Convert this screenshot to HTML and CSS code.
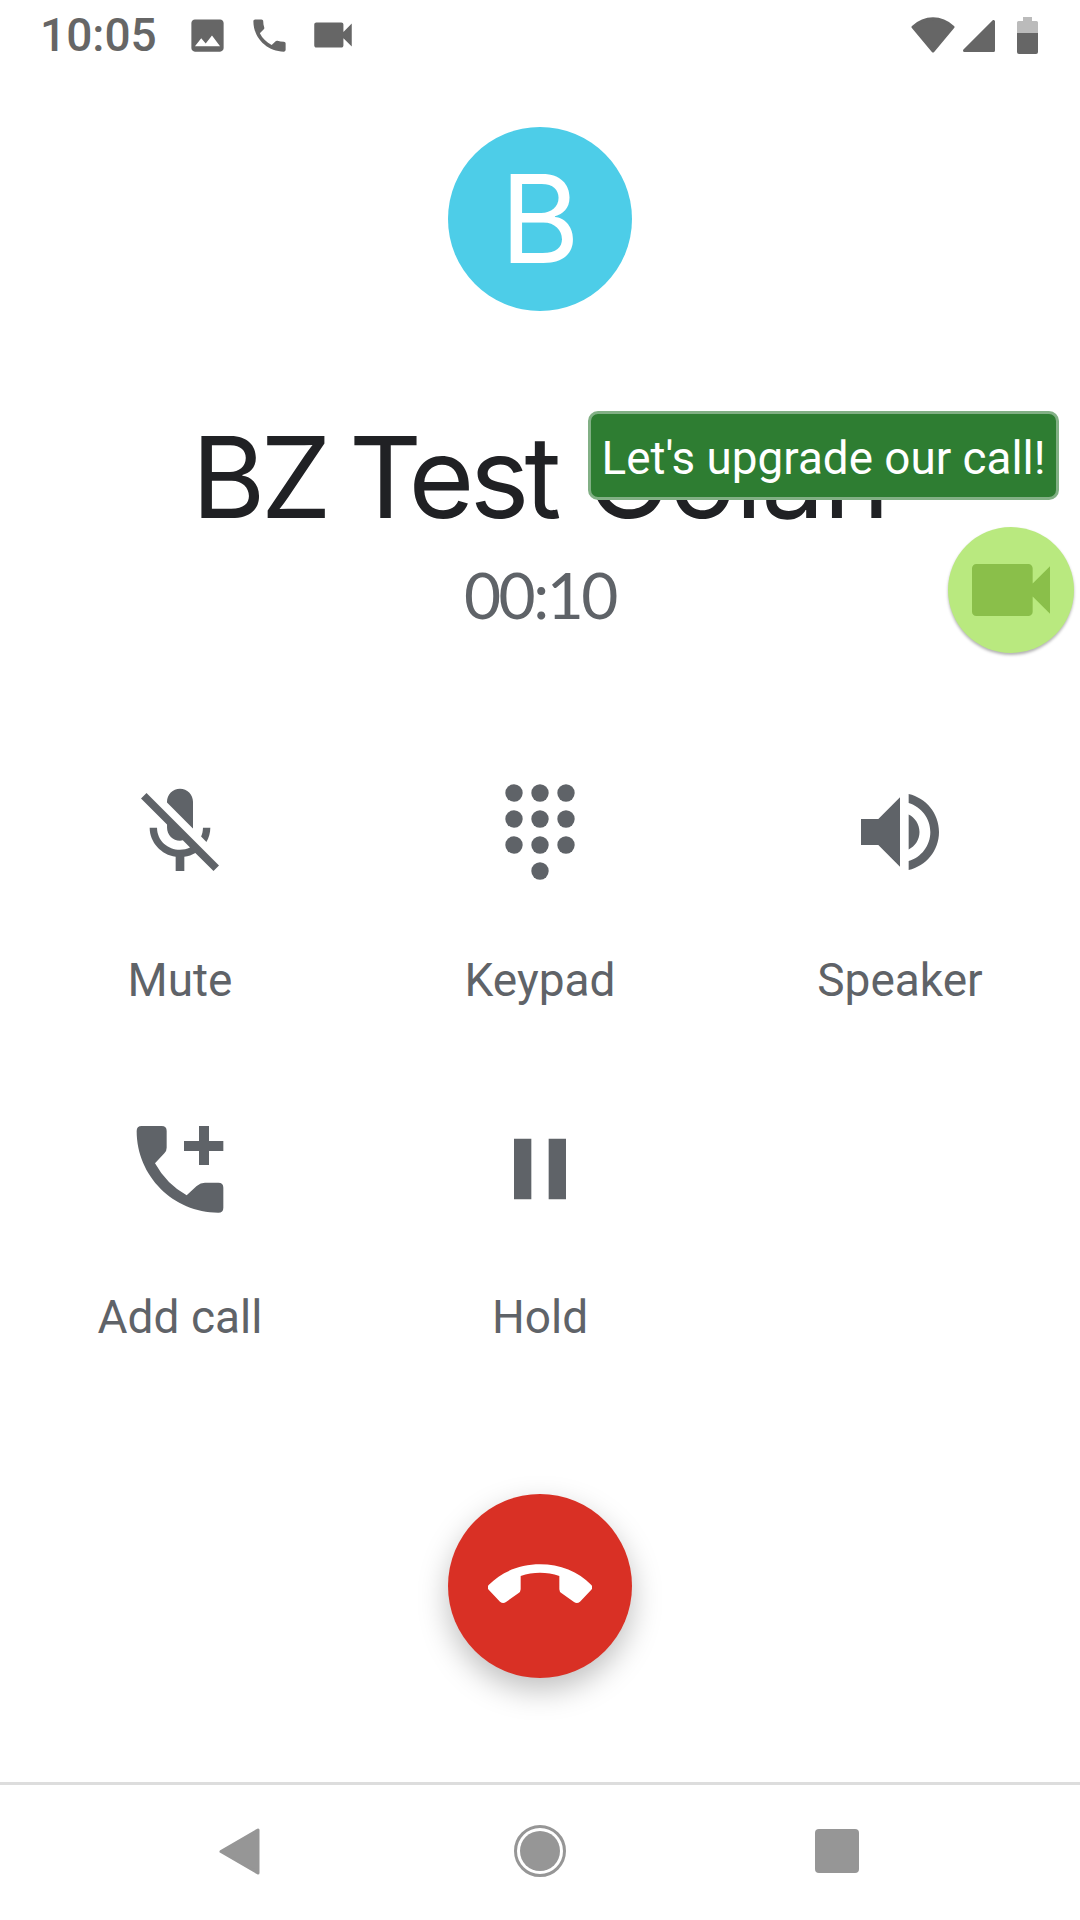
FILE: index.html
```html
<!DOCTYPE html>
<html lang="en">
<head>
    <meta charset="UTF-8">
    <meta name="viewport" content="width=device-width, initial-scale=1.0">
    <title>Call</title>
    <link rel="stylesheet" href="styles.css">
</head>
<body>
    <div class="screen">
        <div class="status-bar">
            <span class="clock">10:05</span>
            <svg class="status-icon image-icon" viewBox="0 0 24 24"><path d="M21 19V5c0-1.1-.9-2-2-2H5c-1.1 0-2 .9-2 2v14c0 1.1.9 2 2 2h14c1.1 0 2-.9 2-2zM8.5 13.5l2.5 3.01L14.5 12l4.5 6H5l3.5-4.5z"/></svg>
            <svg class="status-icon phone-icon" viewBox="0 0 24 24"><path d="M20 15.5c-1.25 0-2.45-.2-3.57-.57-.35-.11-.74-.03-1.02.24l-2.2 2.2c-2.83-1.44-5.15-3.75-6.59-6.59l2.2-2.21c.28-.26.36-.65.25-1C8.7 6.45 8.5 5.25 8.5 4c0-.55-.45-1-1-1H4c-.55 0-1 .45-1 1 0 9.39 7.61 17 17 17 .55 0 1-.45 1-1v-3.5c0-.55-.45-1-1-1z"/></svg>
            <svg class="status-icon cam-icon" viewBox="0 0 24 24"><path d="M17 10.5V7c0-.55-.45-1-1-1H4c-.55 0-1 .45-1 1v10c0 .55.45 1 1 1h12c.55 0 1-.45 1-1v-3.5l4 4v-11l-4 4z"/></svg>
            <div class="status-right">
                <svg class="wifi-icon" viewBox="0 0 44 36"><path d="M2 10C14 -1 30 -1 42 10L22 34Z" stroke-linejoin="round" stroke-width="3"/></svg>
                <svg class="signal-icon" viewBox="0 0 32 32"><path d="M30.5 1.5V30.5H1.5Z" stroke-linejoin="round" stroke-width="3"/></svg>
                <svg class="battery-icon" viewBox="0 0 21 37">
                    <path class="battery-empty" d="M6 0h9v4h4.500a1.500 1.500 0 0 1 1.500 1.500V16H0V5.500A1.500 1.500 0 0 1 1.500 4H6z"/>
                    <path d="M0 16h21v19a2 2 0 0 1-2 2H2a2 2 0 0 1-2-2z"/>
                </svg>
            </div>
        </div>

        <div class="caller">
            <div class="avatar">B</div>
            <div class="caller-name">BZ Test <span class="last-name">Golan</span></div>
            <div class="timer">00:10</div>
        </div>

        <div class="tooltip">Let's upgrade our call!</div>
        <div class="video-fab">
            <svg viewBox="0 0 24 24"><path d="M17 10.5V7c0-.55-.45-1-1-1H4c-.55 0-1 .45-1 1v10c0 .55.45 1 1 1h12c.55 0 1-.45 1-1v-3.500l4 4v-11l-4 4z"/></svg>
        </div>

        <div class="controls">
            <div class="control">
                <div class="control-icon">
                    <svg viewBox="0 0 24 24"><path d="M19 11h-1.700c0 .74-.16 1.430-.43 2.050l1.230 1.230c.56-.98.9-2.090.9-3.280zm-4.020.17c0-.06.02-.11.02-.17V5c0-1.660-1.340-3-3-3s-3 1.340-3 3v.18l5.980 5.990zM4.270 3L3 4.270l6.010 6.010V11c0 1.660 1.330 3 2.990 3 .22 0 .44-.03.65-.08l1.660 1.660c-.71.33-1.500.52-2.310.52-2.760 0-5.300-2.100-5.300-5.100H5c0 3.410 2.720 6.230 6 6.720V21h2v-3.280c.91-.13 1.770-.45 2.540-.9L19.730 21 21 19.730 4.270 3z"/></svg>
                </div>
                <div class="control-label">Mute</div>
            </div>
            <div class="control">
                <div class="control-icon">
                    <svg viewBox="0 0 24 24">
                        <circle cx="6" cy="3" r="2"/><circle cx="12" cy="3" r="2"/><circle cx="18" cy="3" r="2"/>
                        <circle cx="6" cy="9" r="2"/><circle cx="12" cy="9" r="2"/><circle cx="18" cy="9" r="2"/>
                        <circle cx="6" cy="15" r="2"/><circle cx="12" cy="15" r="2"/><circle cx="18" cy="15" r="2"/>
                        <circle cx="12" cy="21" r="2"/>
                    </svg>
                </div>
                <div class="control-label">Keypad</div>
            </div>
            <div class="control">
                <div class="control-icon">
                    <svg viewBox="0 0 24 24"><path d="M3 9v6h4l5 5V4L7 9H3zm13.500 3c0-1.770-1.020-3.290-2.500-4.030v8.050c1.480-.73 2.500-2.250 2.500-4.020zM14 3.230v2.060c2.890.86 5 3.540 5 6.710s-2.110 5.850-5 6.710v2.060c4.010-.91 7-4.490 7-8.770s-2.990-7.860-7-8.770z"/></svg>
                </div>
                <div class="control-label">Speaker</div>
            </div>
            <div class="control">
                <div class="control-icon">
                    <svg class="add-call-icon" viewBox="36 30 348 348">
                        <path d="M95 75H155Q170 75 170 90V140Q170 150 163 157L135 187Q170 250 230 283L260 255Q272 245 285 245H325Q340 245 340 260V320Q340 335 325 335C190 335 80 225 80 90Q80 75 95 75Z"/>
                        <path d="M267 75h30v45h43v30h-43v42h-30v-42h-45v-30h45z"/>
                    </svg>
                </div>
                <div class="control-label">Add call</div>
            </div>
            <div class="control">
                <div class="control-icon">
                    <svg viewBox="0 0 24 24"><path d="M6 19h4V5H6v14zm8-14v14h4V5h-4z"/></svg>
                </div>
                <div class="control-label">Hold</div>
            </div>
        </div>

        <div class="end-call">
            <svg viewBox="204 192 312 312"><path d="M206 345C245 305 300 283 360 283C420 283 475 305 514 345Q520 352 514 359L480 395Q471 403 462 396L425 370Q418 366 418 358V318C380 305 340 305 302 318V358Q302 366 295 370L258 396Q249 403 240 395L206 359Q200 352 206 345Z"/></svg>
        </div>

        <div class="nav-bar">
            <svg class="nav-back" viewBox="0 0 41 47"><path d="M39 2V45L2 23.500Z" stroke-linejoin="round" stroke-width="3"/></svg>
            <div class="nav-home"><div class="nav-home-dot"></div></div>
            <div class="nav-recent"></div>
        </div>
    </div>
</body>
</html>
```

FILE: styles.css
```css
* {
    margin: 0;
    padding: 0;
    box-sizing: border-box;
}

body {
    background-color: #fff;
    font-family: Roboto, sans-serif;
}

.screen {
    position: relative;
    width: 1080px;
    height: 1920px;
    overflow: hidden;
    display: flex;
    flex-direction: column;
    align-items: center;
}

/* status bar */
.status-bar {
    width: 100%;
    height: 70px;
    display: flex;
    align-items: center;
    padding: 0 42px 0 40px;
    color: #666;
}

.clock {
    font-size: 46px;
    font-weight: 500;
    width: 146px;
}

.status-icon {
    width: 43px;
    height: 43px;
    fill: #666;
}

.phone-icon {
    margin-left: 19px;
}

.cam-icon {
    width: 50px;
    height: 50px;
    margin-left: 17px;
}

.status-right {
    margin-left: auto;
    display: flex;
    align-items: flex-start;
}

.wifi-icon {
    width: 44px;
    height: 36px;
    fill: #666;
    stroke: #666;
}

.signal-icon {
    width: 32px;
    height: 32px;
    margin-left: 8px;
    margin-top: 3px;
    fill: #666;
    stroke: #666;
}

.battery-icon {
    width: 21px;
    height: 37px;
    margin-left: 22px;
    fill: #666;
}

.battery-empty {
    fill: #bbb;
}

/* caller */
.caller {
    display: flex;
    flex-direction: column;
    align-items: center;
    font-family: Inter, sans-serif;
}

.avatar {
    width: 184px;
    height: 184px;
    margin-top: 57px;
    border-radius: 50%;
    background-color: #4dcde8;
    color: #fff;
    font-size: 122px;
    line-height: 184px;
    text-align: center;
}

.caller-name {
    margin-top: 101px;
    font-size: 113px;
    line-height: 130px;
    letter-spacing: -4.7px;
    word-spacing: -5px;
    color: #202124;
    white-space: nowrap;
}

.last-name {
    margin-left: 7px;
    letter-spacing: -1.4px;
}

.timer {
    margin-top: 17px;
    font-family: Lato, sans-serif;
    font-size: 64px;
    line-height: 72px;
    letter-spacing: -2.5px;
    color: #5f6368;
}

/* overlay from the upgrade prompt */
.tooltip {
    position: absolute;
    left: 588px;
    top: 411px;
    width: 471px;
    height: 89px;
    padding-top: 6px;
    border: 3px solid #82b085;
    border-radius: 10px;
    background-color: #2e7d32;
    color: #fff;
    font-size: 45.8px;
    line-height: 77px;
    text-align: center;
    white-space: nowrap;
}

.video-fab {
    position: absolute;
    left: 948px;
    top: 527px;
    width: 126px;
    height: 126px;
    border-radius: 50%;
    background-color: #b9e97f;
    box-shadow: 0 2px 3px rgba(0, 0, 0, 0.3);
    display: flex;
    justify-content: center;
    align-items: center;
}

.video-fab svg {
    width: 104px;
    height: 104px;
    fill: #8abf4a;
}

/* call controls */
.controls {
    width: 100%;
    margin-top: 141px;
    display: grid;
    grid-template-columns: repeat(3, 1fr);
    grid-auto-rows: 337px;
}

.control {
    display: flex;
    flex-direction: column;
    align-items: center;
}

.control-icon {
    height: 120px;
    display: flex;
    align-items: center;
    justify-content: center;
}

.control-icon svg {
    width: 104px;
    height: 104px;
    fill: #5f6368;
}

.control-icon .add-call-icon {
    width: 116px;
    height: 116px;
}

.control-label {
    margin-top: 58px;
    font-size: 46px;
    line-height: 60px;
    color: #5f6368;
}

.end-call {
    width: 184px;
    height: 184px;
    margin-top: 48px;
    border-radius: 50%;
    background-color: #d93025;
    box-shadow: 0 12px 30px rgba(0, 0, 0, 0.25);
    display: flex;
    justify-content: center;
    align-items: center;
}

.end-call svg {
    width: 104px;
    height: 104px;
    fill: #fff;
}

/* nav bar */
.nav-bar {
    position: relative;
    width: 100%;
    margin-top: auto;
    height: 138px;
    border-top: 3px solid #ddd;
}

.nav-back {
    position: absolute;
    left: 219px;
    top: 43px;
    width: 41px;
    height: 47px;
    fill: #969696;
    stroke: #969696;
}

.nav-home {
    position: absolute;
    left: 514px;
    top: 40px;
    width: 52px;
    height: 52px;
    border: 3px solid #969696;
    border-radius: 50%;
    padding: 3px;
}

.nav-home-dot {
    width: 100%;
    height: 100%;
    border-radius: 50%;
    background-color: #969696;
}

.nav-recent {
    position: absolute;
    left: 815px;
    top: 44px;
    width: 44px;
    height: 44px;
    border-radius: 4px;
    background-color: #969696;
}
```
